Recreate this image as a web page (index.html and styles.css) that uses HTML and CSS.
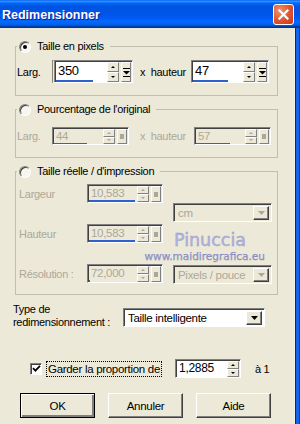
FILE: index.html
```html
<!DOCTYPE html>
<html lang="fr">
<head>
  <meta charset="UTF-8">
  <meta name="viewport" content="width=device-width, initial-scale=1.0">
  <title>Redimensionner</title>
  <link rel="stylesheet" href="styles.css">
</head>
<body>
  <div class="window">
    <div class="titlebar">
      <span class="title">Redimensionner</span>
      <span class="close">
        <svg width="11" height="11" viewBox="0 0 11 11"><path d="M1.5 1.5L9.5 9.5M9.5 1.5L1.5 9.5" stroke="#fff" stroke-width="2.2" stroke-linecap="square"/></svg>
      </span>
    </div>

    <div class="frame">
      <div class="client">

        <!-- Taille en pixels -->
        <fieldset class="group group-pixels">
          <legend><span class="radio checked"></span>Taille en pixels</legend>
          <div class="size-row">
            <span class="lbl">Larg.</span>
            <div class="spin spin-px1">
              <div class="spin-value"><span>350</span><i class="bar" style="width:37px"></i></div>
              <div class="spin-arrows"><b class="up"></b><b class="down"></b></div>
              <div class="spin-more"><svg width="7" height="9" viewBox="0 0 7 9"><rect x="0" y="0" width="7" height="1"/><path d="M0 3h7L3.5 6.5z"/><rect x="0" y="8" width="7" height="1"/></svg></div>
            </div>
            <span class="times times-px">x&nbsp; hauteur</span>
            <div class="spin spin-px2">
              <div class="spin-value"><span>47</span><i class="bar" style="width:35px"></i></div>
              <div class="spin-arrows"><b class="up"></b><b class="down"></b></div>
              <div class="spin-more"><svg width="7" height="9" viewBox="0 0 7 9"><rect x="0" y="0" width="7" height="1"/><path d="M0 3h7L3.5 6.5z"/><rect x="0" y="8" width="7" height="1"/></svg></div>
            </div>
          </div>
        </fieldset>

        <!-- Pourcentage -->
        <fieldset class="group group-percent">
          <legend><span class="radio"></span>Pourcentage de l'original</legend>
          <div class="size-row disabled">
            <span class="lbl">Larg.</span>
            <div class="spin spin-pc">
              <div class="spin-value"><span>44</span><i class="bar" style="width:33px"></i></div>
              <div class="spin-arrows"><b class="up"></b><b class="down"></b></div>
              <div class="spin-more"><span class="square"></span></div>
            </div>
            <span class="times times-pc">x&nbsp; hauteur</span>
            <div class="spin spin-pc">
              <div class="spin-value"><span>57</span><i class="bar" style="width:34px"></i></div>
              <div class="spin-arrows"><b class="up"></b><b class="down"></b></div>
              <div class="spin-more"><span class="square"></span></div>
            </div>
          </div>
        </fieldset>

        <!-- Taille réelle -->
        <fieldset class="group group-print">
          <legend><span class="radio"></span>Taille réelle / d'impression</legend>
          <div class="print-grid disabled">
            <div class="print-left">
              <div class="print-row">
                <span class="lbl-wide">Largeur</span>
                <div class="spin spin-print">
                  <div class="spin-value"><span>10,583</span><i class="bar" style="width:46px"></i></div>
                  <div class="spin-arrows"><b class="up"></b><b class="down"></b></div>
                  <div class="spin-more"><span class="square"></span></div>
                </div>
              </div>
              <div class="print-row">
                <span class="lbl-wide">Hauteur</span>
                <div class="spin spin-print">
                  <div class="spin-value"><span>10,583</span><i class="bar" style="width:46px"></i></div>
                  <div class="spin-arrows"><b class="up"></b><b class="down"></b></div>
                  <div class="spin-more"><span class="square"></span></div>
                </div>
              </div>
              <div class="print-row">
                <span class="lbl-wide">Résolution :</span>
                <div class="spin spin-print">
                  <div class="spin-value"><span>72,000</span><i class="bar bar-dot" style="width:1px"></i></div>
                  <div class="spin-arrows"><b class="up"></b><b class="down"></b></div>
                  <div class="spin-more"><span class="square"></span></div>
                </div>
              </div>
            </div>
            <div class="print-right">
              <div class="combo combo-unit">
                <span class="combo-value">cm</span>
                <span class="combo-btn"><svg width="7" height="4" viewBox="0 0 7 4"><path d="M0 0h7L3.5 4z"/></svg></span>
              </div>
              <div class="watermark">
                <span class="wm-name">Pinuccia</span>
                <span class="wm-url">www.maidiregrafica.eu</span>
              </div>
              <div class="combo combo-res">
                <span class="combo-value">Pixels / pouce</span>
                <span class="combo-btn"><svg width="7" height="4" viewBox="0 0 7 4"><path d="M0 0h7L3.5 4z"/></svg></span>
              </div>
            </div>
          </div>
        </fieldset>

        <div class="type-row">
          <span class="type-lbl">Type de<br>redimensionnement :</span>
          <div class="combo combo-type">
            <span class="combo-value">Taille intelligente</span>
            <span class="combo-btn"><svg width="7" height="4" viewBox="0 0 7 4"><path d="M0 0h7L3.5 4z"/></svg></span>
          </div>
        </div>

        <div class="ratio-row">
          <span class="check"><svg width="9" height="9" viewBox="0 0 9 9"><path d="M1 4.2l2.4 2.4L8 1.8" stroke="#000" stroke-width="1.8" fill="none"/></svg></span>
          <span class="focus-lbl">Garder la proportion de</span>
          <div class="spin spin-ratio">
            <div class="spin-value"><span>1,2885</span></div>
            <div class="spin-arrows"><b class="up"></b><b class="down"></b></div>
          </div>
          <span class="ratio-end">à 1</span>
        </div>

        <div class="buttons">
          <button class="btn btn-default">OK</button>
          <button class="btn">Annuler</button>
          <button class="btn">Aide</button>
        </div>

      </div>
      <div class="edge"></div>
    </div>
  </div>
</body>
</html>
```

FILE: styles.css
```css
* {
  box-sizing: border-box;
}
body {
  margin: 0;
  background-color: #ece9d8;
  font-family: "Liberation Sans", Arial, sans-serif;
  font-size: 11px;
  letter-spacing: -0.3px;
  color: #000;
}
.window {
  width: 300px;
  height: 424px;
  display: flex;
  flex-direction: column;
  overflow: hidden;
}

/* title bar */
.titlebar {
  height: 28px;
  flex: none;
  display: flex;
  align-items: center;
  justify-content: space-between;
  padding: 0 6px 0 2px;
  background: linear-gradient(to bottom, #0058ee 0%, #3593ff 4%, #288eff 6%, #127dff 8%, #036ffc 10%, #0262ee 14%, #0057e5 20%, #0054e3 24%, #0055eb 56%, #005bf5 66%, #026afe 76%, #0062ef 86%, #0052d6 92%, #0040ab 94%, #003092 100%);
}
.title {
  color: #fff;
  font-weight: bold;
  font-size: 12.5px;
  letter-spacing: 0;
  text-shadow: 1px 1px 0 #0a1f8f;
  padding-top: 1px;
}
.close {
  width: 21px;
  height: 21px;
  border: 1px solid #fff;
  border-radius: 3px;
  background: radial-gradient(circle at 30% 30%, #f0926f 0%, #e0522f 55%, #c53a18 100%);
  display: flex;
  align-items: center;
  justify-content: center;
}

.frame {
  flex: 1;
  display: flex;
}
.client {
  flex: 1;
  background-color: #ece9d8;
}
.edge {
  width: 6px;
  background: linear-gradient(90deg, #f4f2e6 0 1px, #00209e 1px 2px, #1664ee 2px 5px, #0a3fbe 5px);
}

/* group boxes */
.group {
  margin: 7px 0 0 15px;
  width: 263px;
  min-width: 0;
  padding: 0 0 0 1px;
  border: 1px solid #c3bfad;
}
.group legend {
  display: flex;
  align-items: center;
  height: 13px;
  line-height: 13px;
  padding: 0 6px 0 2px;
  gap: 6px;
}
.group-pixels {
  margin-top: 12px;
  padding-top: 7px;
  padding-bottom: 12px;
}
.group-percent {
  padding-top: 11px;
  padding-bottom: 12px;
}
.group-print {
  padding-top: 6px;
  padding-bottom: 10px;
}

.radio {
  width: 12px;
  height: 12px;
  border-radius: 50%;
  border: 1px solid;
  border-color: #808080 #fff #fff #808080;
  box-shadow: inset 1px 1px 0 #404040;
  background-color: #f6f5ee;
  display: flex;
  align-items: center;
  justify-content: center;
}
.radio.checked::after {
  content: "";
  width: 4px;
  height: 4px;
  border-radius: 50%;
  background-color: #000;
}

.disabled {
  color: #aca899;
}

/* size rows */
.size-row {
  display: flex;
  align-items: center;
}
.lbl {
  width: 35px;
}
.times-px {
  width: 51px;
  margin-left: 7px;
}
.times-pc {
  width: 54px;
  margin-left: 11px;
}

/* spin fields */
.spin {
  display: flex;
  border: 1px solid;
  border-color: #808080 #fff #fff #808080;
  box-shadow: inset 1px 1px 0 #404040;
  padding: 1px 1px 0 1px;
  background-color: #ece9d8;
}
.spin-px1 {
  width: 81px;
  height: 23px;
  border-left: 3px double #8a877a;
}
.spin-px2 {
  width: 78px;
  height: 23px;
}
.spin-pc {
  width: 77px;
  height: 18px;
}
.spin-print {
  width: 76px;
  height: 19px;
}
.spin-ratio {
  width: 66px;
  height: 19px;
  margin-left: 13px;
}
.spin-value {
  flex: 1;
  display: flex;
  flex-direction: column;
  padding-left: 2px;
  background-color: #fff;
  line-height: 14px;
  font-size: 12px;
}
.disabled .spin-value {
  background-color: #ece9d8;
  font-size: 11.5px;
}
.spin-px1 .spin-value,
.spin-px2 .spin-value {
  padding-top: 2px;
  font-size: 13px;
}
.bar {
  display: block;
  margin-top: auto;
  margin-left: -2px;
  height: 2px;
  background-color: #2d62cc;
}
.bar-dot {
  height: 3px;
}
.spin-arrows {
  width: 12px;
  display: flex;
  flex-direction: column;
}
.spin-arrows b {
  flex: 1;
  display: flex;
  align-items: center;
  justify-content: center;
  border: 1px solid;
  border-color: #fff #808080 #808080 #fff;
  background-color: #ece9d8;
}
.spin-arrows .up::after {
  content: "";
  border-left: 2px solid transparent;
  border-right: 2px solid transparent;
  border-bottom: 2px solid #000;
}
.spin-arrows .down::after {
  content: "";
  border-left: 2px solid transparent;
  border-right: 2px solid transparent;
  border-top: 2px solid #000;
}
.disabled .spin-arrows .up::after {
  border-bottom-color: #aca899;
}
.disabled .spin-arrows .down::after {
  border-top-color: #aca899;
}
.spin-more {
  width: 10px;
  margin-left: 2px;
  display: flex;
  align-items: center;
  justify-content: center;
  border: 1px solid;
  border-color: #fff #808080 #808080 #fff;
  background-color: #ece9d8;
}
.square {
  width: 4px;
  height: 5px;
  background-color: #aca899;
}

/* print size grid */
.print-grid {
  display: flex;
  padding-left: 2px;
}
.print-left {
  display: flex;
  flex-direction: column;
  gap: 21px;
}
.print-row {
  display: flex;
  align-items: center;
}
.lbl-wide {
  width: 68px;
}
.print-right {
  width: 99px;
  margin-left: 10px;
  display: flex;
  flex-direction: column;
}

/* combo boxes */
.combo {
  display: flex;
  align-items: stretch;
  height: 19px;
  border: 1px solid;
  border-color: #808080 #fff #fff #808080;
  box-shadow: inset 1px 1px 0 #404040;
  padding: 2px 2px 1px 2px;
  background-color: #fff;
}
.disabled .combo {
  background-color: #ece9d8;
}
.combo-value {
  flex: 1;
  padding-left: 2px;
  line-height: 14px;
  font-size: 11.5px;
}
.combo-btn {
  width: 16px;
  display: flex;
  align-items: center;
  justify-content: center;
  border: 1px solid;
  border-color: #fff #404040 #404040 #fff;
  box-shadow: inset -1px -1px 0 #808080;
  background-color: #ece9d8;
}
.disabled .combo-btn svg {
  fill: #aca899;
}
.combo-unit {
  margin-top: 19px;
}
.combo-res {
  margin-top: 3px;
}

/* watermark */
.watermark {
  height: 40px;
  padding-top: 8px;
  display: flex;
  flex-direction: column;
  align-items: flex-end;
  letter-spacing: 0;
  font-family: "DejaVu Sans", sans-serif;
}
.wm-name {
  align-self: flex-start;
  margin-left: 1px;
  font-size: 17.5px;
  line-height: 20px;
  color: #b3b5de;
  -webkit-text-stroke: 0.4px #9699cb;
}
.wm-url {
  margin-right: 7px;
  font-size: 10.5px;
  line-height: 12px;
  white-space: nowrap;
  color: #9a9dcd;
  -webkit-text-stroke: 0.25px #7478b6;
}

/* resize type */
.type-row {
  display: flex;
  align-items: flex-start;
  margin-top: 8px;
  padding-left: 13px;
}
.type-lbl {
  width: 110px;
  line-height: 13px;
}
.combo-type {
  width: 142px;
  margin-top: 5px;
}

/* ratio */
.ratio-row {
  display: flex;
  align-items: center;
  height: 19px;
  margin-top: 30px;
  padding-left: 30px;
}
.check {
  width: 12px;
  height: 12px;
  border: 1px solid;
  border-color: #808080 #fff #fff #808080;
  box-shadow: inset 1px 1px 0 #404040;
  background-color: #fff;
  display: flex;
  align-items: center;
  justify-content: center;
}
.focus-lbl {
  margin-left: 4px;
  height: 16px;
  line-height: 14px;
  padding: 0 1px;
  border: 1px dotted #000;
  font-size: 11.5px;
}
.ratio-end {
  margin-left: 14px;
}

/* buttons */
.buttons {
  display: flex;
  margin-top: 15px;
  padding-left: 20px;
}
.btn {
  width: 75px;
  height: 25px;
  margin-right: 13px;
  padding: 0;
  font-family: inherit;
  font-size: 11.5px;
  letter-spacing: -0.3px;
  color: #000;
  background-color: #ece9d8;
  border: 1px solid;
  border-color: #fff #404040 #404040 #fff;
  box-shadow: inset -1px -1px 0 #808080;
}
.btn-default {
  border-color: #000;
  box-shadow: inset 1px 1px 0 #fff, inset -2px -2px 0 #808080;
}
```
